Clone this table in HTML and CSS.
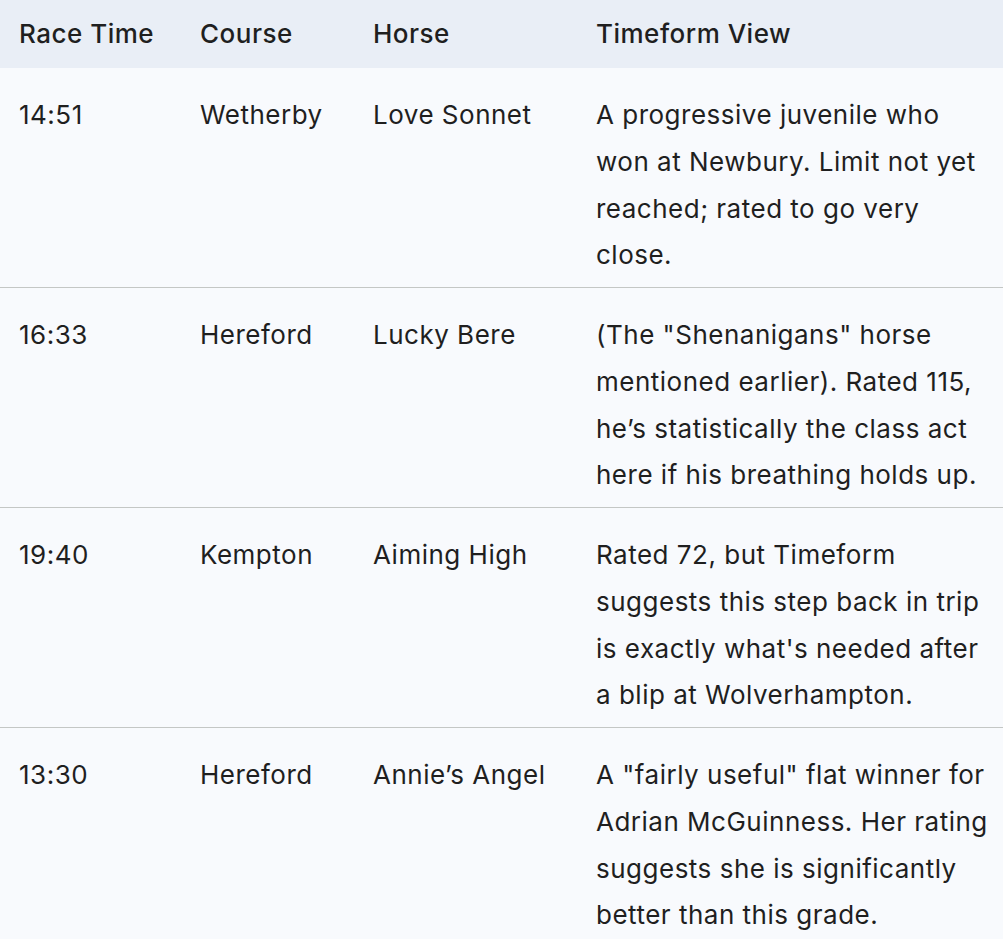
FILE: index.html
```html
<!DOCTYPE html>
<html lang="en">
<head>
<meta charset="utf-8">
<title>Timeform View</title>
<link rel="stylesheet" href="styles.css">
</head>
<body>
<div class="wrap">
<table class="races">
  <colgroup>
    <col class="c-time">
    <col class="c-course">
    <col class="c-horse">
    <col class="c-view">
  </colgroup>
  <thead>
    <tr>
      <th>Race Time</th>
      <th>Course</th>
      <th>Horse</th>
      <th>Timeform View</th>
    </tr>
  </thead>
  <tbody>
    <tr>
      <td>14:51</td>
      <td>Wetherby</td>
      <td>Love Sonnet</td>
      <td>A progressive juvenile who won at Newbury. Limit not yet reached; rated to go very close.</td>
    </tr>
    <tr>
      <td>16:33</td>
      <td>Hereford</td>
      <td>Lucky Bere</td>
      <td>(The "Shenanigans" horse mentioned earlier). Rated 115, he’s statistically the class act here if his breathing holds up.</td>
    </tr>
    <tr>
      <td>19:40</td>
      <td>Kempton</td>
      <td>Aiming High</td>
      <td>Rated 72, but Timeform suggests this step back in trip is exactly what's needed after a blip at Wolverhampton.</td>
    </tr>
    <tr>
      <td>13:30</td>
      <td>Hereford</td>
      <td>Annie’s Angel</td>
      <td>A "fairly useful" flat winner for Adrian McGuinness. Her rating suggests she is significantly better than this grade.</td>
    </tr>
  </tbody>
</table>
</div>
</body>
</html>
```
FILE: styles.css
```css
html, body {
  margin: 0;
  padding: 0;
  overflow: hidden;
  background: #f8fafd;
}
.wrap {
  width: 1003px;
  overflow: hidden;
}
.races {
  border-collapse: collapse;
  table-layout: fixed;
  width: 1010px;
  font-family: Inter, "Noto Sans", sans-serif;
  font-size: 26px;
  letter-spacing: 0.5px;
  line-height: 46.75px;
  color: #1f1f1f;
}
.c-time { width: 181px; }
.c-course { width: 173px; }
.c-horse { width: 223px; }
.c-view { width: 433px; }
.races th {
  background: #e9eef6;
  font-weight: 500;
  text-align: left;
  height: 68px;
  padding: 0 19px;
  vertical-align: middle;
}
.races td {
  background: #f8fafd;
  padding: 24px 19px 8px;
  vertical-align: top;
  border-bottom: 1px solid #c4c7c5;
}
```
